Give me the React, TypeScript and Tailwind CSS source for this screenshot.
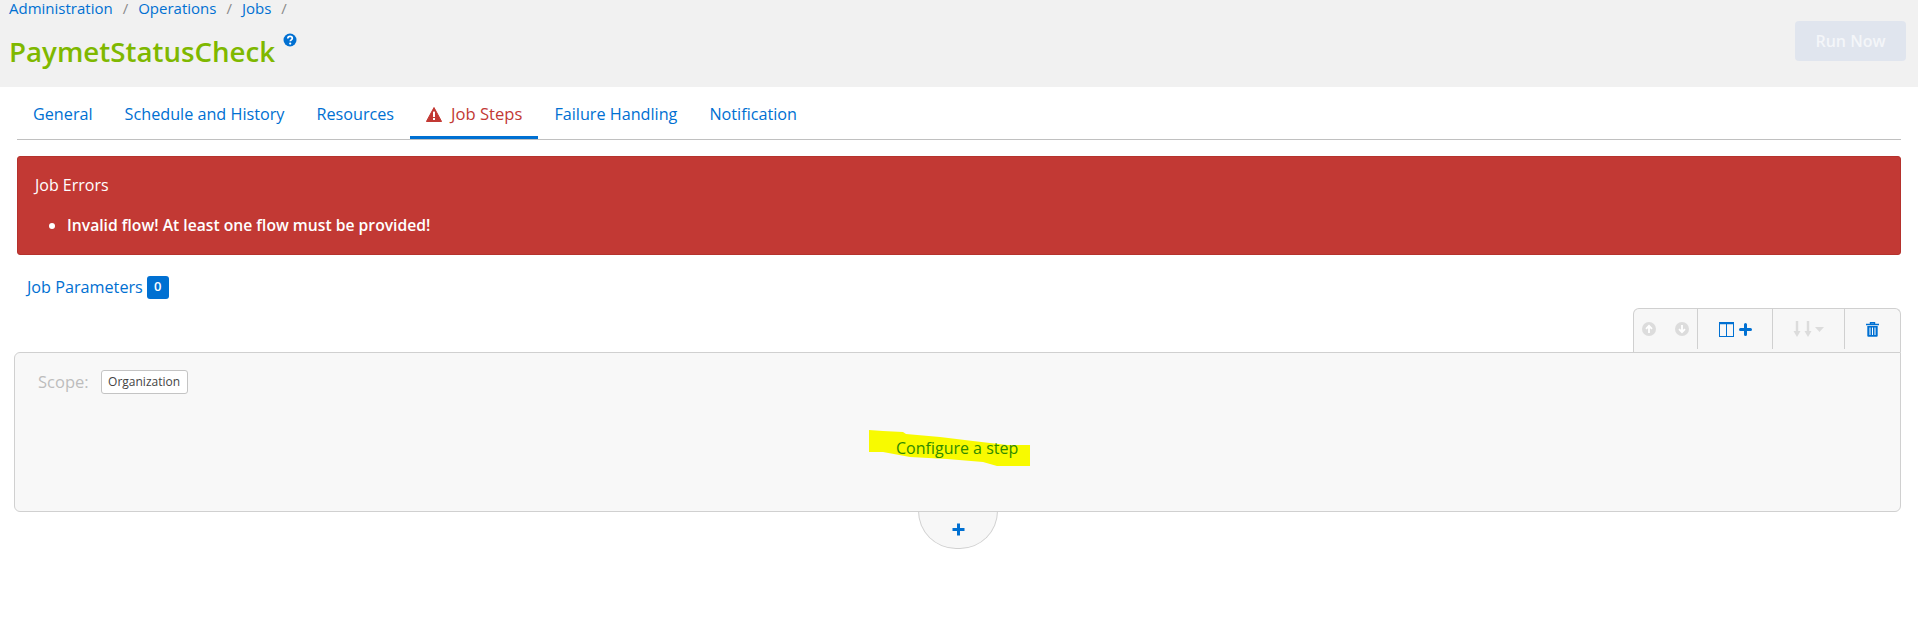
import React from "react";

function Tab({ children, active }: { children: React.ReactNode; active?: boolean }) {
  return (
    <div className={active ? "flex h-[52px] items-center gap-[9px] border-b-[3px] border-[#0070d2] px-4 pt-[5px] text-[#c23934]" : "flex h-[52px] items-center border-b-[3px] border-transparent px-4 pt-[5px] text-[#0070d2]"}>
      {children}
    </div>
  );
}

function Sep() {
  return <div className="h-[40px] w-px self-start bg-[#d0d0d0]" />;
}

export default function App() {
  return (
    <div className="h-[628px] w-[1918px] overflow-hidden bg-white font-['Open_Sans','Noto_Sans',sans-serif] text-[16px] text-[#0070d2]">
      <header className="flex h-[87px] justify-between bg-[#f1f1f1] pl-[9px] pr-[12px]">
        <div>
          <nav className="flex h-[17px] items-center text-[15px] leading-[17px]">
            <span>Administration</span>
            <span className="mx-[10px] text-[#8a8a8a]">/</span>
            <span>Operations</span>
            <span className="mx-[10px] text-[#8a8a8a]">/</span>
            <span>Jobs</span>
            <span className="mx-[10px] text-[#8a8a8a]">/</span>
          </nav>
          <div className="mt-[15px] flex items-start">
            <h1 className="text-[27.7px] font-semibold leading-[38px] text-[#7fb800]">PaymetStatusCheck</h1>
            <svg className="ml-[8px] mt-[1px]" width="14" height="14" viewBox="0 0 14 14">
              <circle cx="7" cy="7" r="6.5" fill="#0070d2" />
              <path d="M4.8 5.4c0-1.3 1-2.1 2.3-2.1s2.2.8 2.2 1.9c0 1.7-2 1.6-2 3.1" fill="none" stroke="#fff" strokeWidth="1.7" />
              <circle cx="7.2" cy="10.6" r="1.1" fill="#fff" />
            </svg>
          </div>
        </div>
        <button className="mt-[21px] h-[40px] w-[111px] rounded-[4px] bg-[#e0e5ee] text-[16px] font-semibold text-[#f4f6f9]">Run Now</button>
      </header>

      <main className="relative pl-[14px] pr-[17px]">
        <div className="ml-[3px] flex h-[53px] border-b border-[#c0c0c0] text-[16.2px]">
          <Tab>General</Tab>
          <Tab>Schedule and History</Tab>
          <Tab>Resources</Tab>
          <Tab active>
            <svg width="16" height="15" viewBox="0 0 16 15">
              <path d="M8 .5 15.6 14.5H.4Z" fill="#c23934" stroke="#c23934" strokeLinejoin="round" />
              <rect x="7" y="4.6" width="2" height="5.4" fill="#fff" />
              <rect x="7" y="11" width="2" height="2" fill="#fff" />
            </svg>
            <span className="text-[16.6px]">Job Steps</span>
          </Tab>
          <Tab>Failure Handling</Tab>
          <Tab>Notification</Tab>
        </div>

        <section className="ml-[3px] mt-[16px] h-[99px] rounded-[3px] border border-[#b5322d] bg-[#c23934] pl-[17px] pt-[18px] text-white">
          <div className="text-[16px] font-medium leading-[20px]">Job Errors</div>
          <ul className="ml-[32px] mt-[20px] list-disc text-[15.7px] font-semibold leading-[20px]">
            <li>Invalid flow! At least one flow must be provided!</li>
          </ul>
        </section>

        <div className="ml-[13px] mt-[20px] flex h-[24px] items-center">
          <span className="text-[16.2px]">Job Parameters</span>
          <span className="ml-[4px] flex h-[23px] w-[22px] items-center justify-center rounded-[3px] bg-[#0070d2] text-[13px] font-semibold text-white">0</span>
        </div>

        <div className="mt-[9px] flex justify-end">
          <div className="flex h-[44px] w-[268px] items-start rounded-t-[6px] border border-b-0 border-[#d0d0d0] bg-[#f7f7f7] pt-0">
            <div className="flex h-[40px] w-[63px] items-center justify-center gap-[19px]">
              <svg width="14" height="14" viewBox="0 0 14 14"><circle cx="7" cy="7" r="7" fill="#dcdcdc" /><path d="M7 11V4M4 6.8 7 3.8l3 3" fill="none" stroke="#fff" strokeWidth="1.8" /></svg>
              <svg width="14" height="14" viewBox="0 0 14 14"><circle cx="7" cy="7" r="7" fill="#dcdcdc" /><path d="M7 3v7M4 7.2l3 3 3-3" fill="none" stroke="#fff" strokeWidth="1.8" /></svg>
            </div>
            <Sep />
            <div className="flex h-[40px] w-[74px] items-center justify-center gap-[5px]">
              <svg width="15" height="15" viewBox="0 0 15 15"><rect x=".5" y=".5" width="14" height="14" fill="none" stroke="#0070d2" /><path d="M.5 1.5h14" stroke="#0070d2" strokeWidth="1.5" /><path d="M7.5 1v13" stroke="#0070d2" /></svg>
              <svg width="13" height="13" viewBox="0 0 13 13"><path d="M6.5 1.5v10M1.5 6.5h10" stroke="#0070d2" strokeWidth="3" strokeLinecap="round" /></svg>
            </div>
            <Sep />
            <div className="flex h-[40px] w-[71px] items-center justify-center gap-[3px]">
              <svg width="8" height="16" viewBox="0 0 8 16"><path d="M4 0v11" stroke="#dcdcdc" strokeWidth="2.4" /><path d="M.5 10h7L4 16Z" fill="#dcdcdc" /></svg>
              <svg width="8" height="16" viewBox="0 0 8 16"><path d="M4 0v11" stroke="#dcdcdc" strokeWidth="2.4" /><path d="M.5 10h7L4 16Z" fill="#dcdcdc" /></svg>
              <svg width="9" height="5" viewBox="0 0 9 5"><path d="M0 0h9L4.5 5Z" fill="#dcdcdc" /></svg>
            </div>
            <Sep />
            <div className="flex h-[40px] flex-1 items-center justify-center">
              <svg width="13" height="15" viewBox="0 0 13 15">
                <path d="M4.5 2V.8h4V2M0 2.5h13" fill="none" stroke="#0070d2" strokeWidth="1.4" />
                <path d="M1.3 4h10.4v9.8a1 1 0 0 1-1 1H2.3a1 1 0 0 1-1-1Z" fill="#0070d2" />
                <path d="M4 5.5v7.5M6.5 5.5v7.5M9 5.5v7.5" stroke="#fff" />
              </svg>
            </div>
          </div>
        </div>

        <section className="relative h-[160px] rounded-b-[6px] rounded-tl-[6px] border border-[#d0d0d0] bg-[#f8f8f8]">
          <div className="ml-[23px] mt-[17px] flex items-center">
            <span className="text-[16.5px] text-[#bdbdbd]">Scope:</span>
            <span className="ml-[12px] flex h-[24px] w-[87px] items-center justify-center rounded-[3px] border border-[#c4c4c4] bg-white text-[12px] text-[#444]">Organization</span>
          </div>
          <svg className="absolute left-[854px] top-[77px]" width="162" height="38" viewBox="0 0 162 38">
            <path d="M0 0 14 1 34 2 37 4 71 7 104 11 138 15H161V36H128L114 32 78 29 41 27 14 22H0Z" fill="#f8fa00" />
          </svg>
          <div className="absolute left-[881px] top-[85px] text-[16px] leading-[20px] text-[#2f8a00]">Configure a step</div>
        </section>

        <div className="flex justify-center pl-[1px]">
          <button className="-mt-px flex h-[38px] w-[80px] items-center justify-center rounded-b-[40px] border border-t-0 border-[#d0d0d0] bg-[#f7f7f7]">
            <svg width="13" height="13" viewBox="0 0 13 13"><path d="M6.5 0.5v12M0.5 6.5h12" stroke="#0070d2" strokeWidth="3" /></svg>
          </button>
        </div>
      </main>
    </div>
  );
}
